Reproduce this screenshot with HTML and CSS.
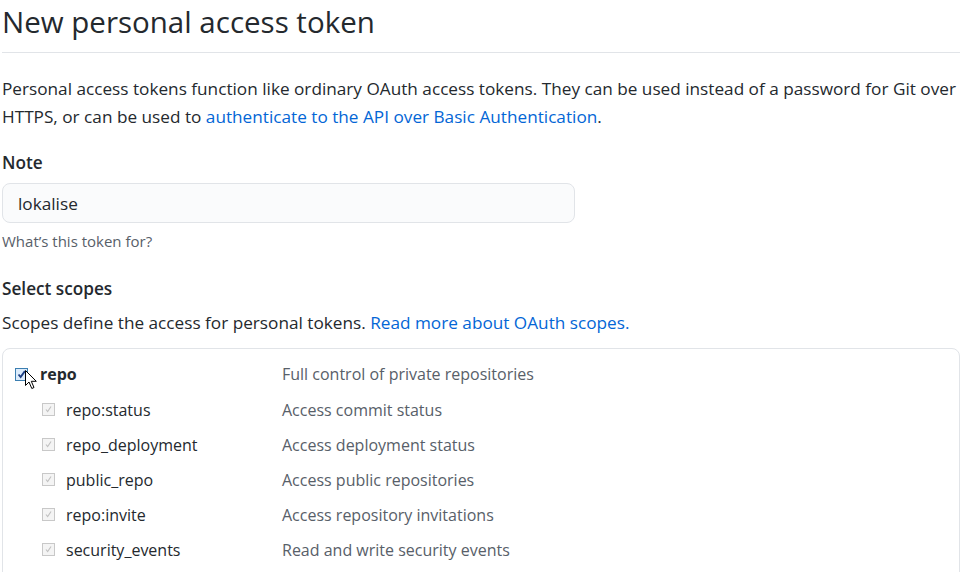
FILE: index.html
```html
<!DOCTYPE html>
<html lang="en">
<head>
  <meta charset="UTF-8" />
  <title>New personal access token</title>
  <link rel="stylesheet" href="styles.css">
</head>
<body>
  <div class="page">
    <h2 class="subhead">New personal access token</h2>

    <p class="intro">Personal access tokens function like ordinary OAuth access tokens. They can be used instead of a password for Git over HTTPS, or can be used to <a href="#">authenticate to the API over Basic Authentication</a>.</p>

    <dl class="form-group">
      <dt><label for="token-note">Note</label></dt>
      <dd>
        <input type="text" id="token-note" class="form-control" value="lokalise" />
        <p class="note">What’s this token for?</p>
      </dd>
    </dl>

    <dl class="form-group scopes-group">
      <dt><label>Select scopes</label></dt>
      <dd>
        <p class="scopes-help">Scopes define the access for personal tokens. <a href="#">Read more about OAuth scopes.</a></p>
        <div class="scopes-box">
          <div class="scope-row parent">
            <span class="check check-on"><svg viewBox="0 0 13 13"><path d="M3 6.5 L5.5 9.5 L10.5 2.5" /></svg></span>
            <span class="scope-name">repo</span>
            <span class="scope-desc">Full control of private repositories</span>
            <svg class="cursor" viewBox="0 0 13 20"><path d="M0.5 0.5 L0.5 15.5 L4 12 L6.8 18.5 L9 17.5 L6.3 11.3 L11.3 11.3 Z" /></svg>
          </div>
          <div class="scope-row child">
            <span class="check check-off"><svg viewBox="0 0 13 13"><path d="M3.5 6.5 L5.5 9 L9.5 3" /></svg></span>
            <span class="scope-name">repo:status</span>
            <span class="scope-desc">Access commit status</span>
          </div>
          <div class="scope-row child">
            <span class="check check-off"><svg viewBox="0 0 13 13"><path d="M3.5 6.5 L5.5 9 L9.5 3" /></svg></span>
            <span class="scope-name">repo_deployment</span>
            <span class="scope-desc">Access deployment status</span>
          </div>
          <div class="scope-row child">
            <span class="check check-off"><svg viewBox="0 0 13 13"><path d="M3.5 6.5 L5.5 9 L9.5 3" /></svg></span>
            <span class="scope-name">public_repo</span>
            <span class="scope-desc">Access public repositories</span>
          </div>
          <div class="scope-row child">
            <span class="check check-off"><svg viewBox="0 0 13 13"><path d="M3.5 6.5 L5.5 9 L9.5 3" /></svg></span>
            <span class="scope-name">repo:invite</span>
            <span class="scope-desc">Access repository invitations</span>
          </div>
          <div class="scope-row child">
            <span class="check check-off"><svg viewBox="0 0 13 13"><path d="M3.5 6.5 L5.5 9 L9.5 3" /></svg></span>
            <span class="scope-name">security_events</span>
            <span class="scope-desc">Read and write security events</span>
          </div>
        </div>
      </dd>
    </dl>
  </div>
</body>
</html>
```

FILE: styles.css
```css
body { margin: 0; background: #fff; color: #24292e; font-family: "Open Sans", "Noto Sans", sans-serif; font-size: 17.2px; line-height: 28px; overflow: hidden; }
a { color: #0366d6; text-decoration: none; }
.page { width: 958px; padding-left: 2px; }

.subhead { margin: 0; padding: 0 0 8px; font-size: 29.5px; font-weight: 400; line-height: 44px; border-bottom: 1px solid #e1e4e8; }
.intro { margin: 22px 0 0; }

.form-group { margin: 18px 0 0; }
.form-group dt { font-weight: 600; margin: 0 0 6px; }
.form-group dd { margin: 0; }
.form-control { box-sizing: border-box; width: 573px; height: 40px; padding: 0 15px; font: inherit; color: #24292e; background: #fafbfc; border: 1px solid #e1e4e8; border-radius: 8px; outline: none; }
.note { margin: 5px 0 0; font-size: 15px; line-height: 26px; color: #586069; }
.scopes-group { margin-top: 21px; }
.scopes-group dt { margin-bottom: 6px; }
.scopes-help { margin: 0 0 11px; }

.scopes-box { border: 1px solid #e1e4e8; border-radius: 8px; padding: 7px 0 40px 12px; font-size: 16px; }
.scope-row { position: relative; display: flex; align-items: center; height: 35px; }
.parent { height: 36px; }
.scope-row.child { padding-left: 27px; }
.scope-name { width: 216px; margin-left: 11px; }
.parent .scope-name { width: 242px; font-weight: 700; margin-left: 12px; }
.scope-desc { color: #586069; }

.check { box-sizing: border-box; width: 13px; height: 13px; display: inline-flex; flex: none; }
.check svg { width: 100%; height: 100%; fill: none; }
.check-on { border: 1px solid #3c7fb1; background: #dcecfc; }
.check-on path { stroke: #1c3f84; stroke-width: 2.2; }
.check-off { border: 1px solid #c8c8c8; background: #f4f4f4; }
.check-off path { stroke: #c0c0c0; stroke-width: 1.3; }

.cursor { position: absolute; left: 10px; top: 14px; width: 13px; height: 20px; }
.cursor path { fill: #fff; stroke: #000; stroke-width: 1; stroke-linejoin: miter; }
```
